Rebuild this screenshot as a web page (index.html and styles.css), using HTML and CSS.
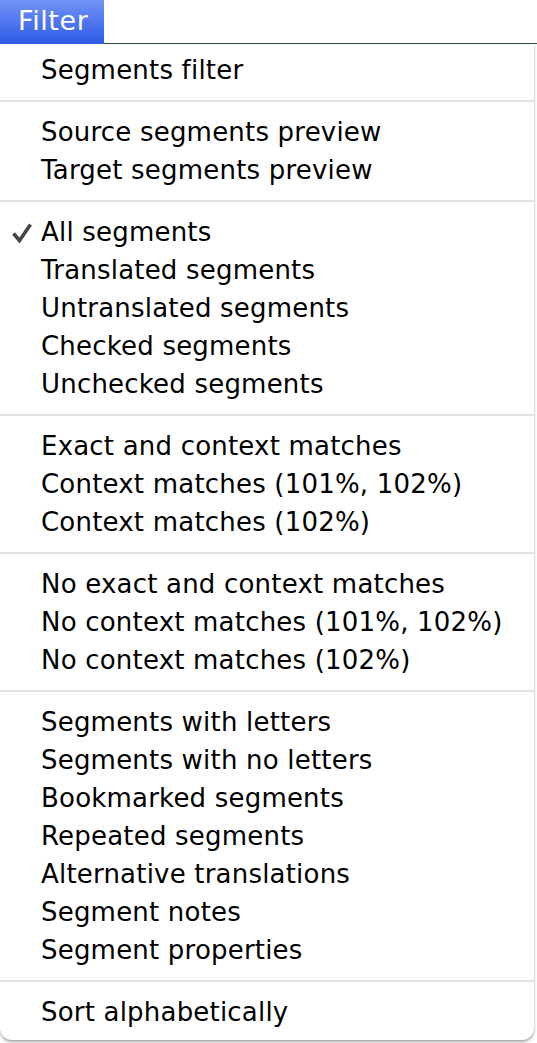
FILE: index.html
```
<!DOCTYPE html>
<html>
<head>
<meta charset="utf-8">
<link rel="stylesheet" href="styles.css">
</head>
<body>
<div class="menubar">
  <div class="title">Filter</div>
  <div class="bar-rest"></div>
</div>
<div class="menu">
  <div class="item">Segments filter</div>
  <div class="sep"></div>
  <div class="item">Source segments preview</div>
  <div class="item">Target segments preview</div>
  <div class="sep"></div>
  <div class="item checked"><svg class="check" width="22" height="22" viewBox="0 0 22 22"><path d="M2.5 11.5 L8.5 18.5 L19.5 2.5" fill="none" stroke="#464646" stroke-width="3.6" stroke-linejoin="miter"/></svg>All segments</div>
  <div class="item">Translated segments</div>
  <div class="item">Untranslated segments</div>
  <div class="item">Checked segments</div>
  <div class="item">Unchecked segments</div>
  <div class="sep"></div>
  <div class="item">Exact and context matches</div>
  <div class="item">Context matches (101%, 102%)</div>
  <div class="item">Context matches (102%)</div>
  <div class="sep"></div>
  <div class="item">No exact and context matches</div>
  <div class="item">No context matches (101%, 102%)</div>
  <div class="item">No context matches (102%)</div>
  <div class="sep"></div>
  <div class="item">Segments with letters</div>
  <div class="item">Segments with no letters</div>
  <div class="item">Bookmarked segments</div>
  <div class="item">Repeated segments</div>
  <div class="item">Alternative translations</div>
  <div class="item">Segment notes</div>
  <div class="item">Segment properties</div>
  <div class="sep"></div>
  <div class="item">Sort alphabetically</div>
</div>
</body>
</html>
```
FILE: styles.css
```
html, body {
  margin: 0;
  padding: 0;
  background: #ffffff;
}
body {
  width: 537px;
  height: 1043px;
  overflow: hidden;
  font-family: "DejaVu Sans", "Noto Sans", sans-serif;
}
.menubar {
  display: flex;
  height: 44px;
}
.title {
  width: 104px;
  height: 44px;
  box-sizing: border-box;
  padding-left: 18px;
  line-height: 42px;
  font-size: 27px;
  letter-spacing: 0.6px;
  color: #ffffff;
  background: linear-gradient(#7292f6, #2c5be7);
}
.bar-rest {
  flex: 1;
  height: 44px;
  box-sizing: border-box;
  border-bottom: 1px solid #2f4a40;
  background: #ffffff;
}
.menu {
  width: 534px;
  box-sizing: border-box;
  padding: 7px 0 9px 0;
  background: #ffffff;
  border-radius: 0 0 12px 12px;
  box-shadow: 0 2px 3px rgba(0, 0, 0, 0.35);
}
.item {
  position: relative;
  height: 38px;
  line-height: 39px;
  padding-left: 41px;
  font-size: 26px;
  letter-spacing: 0.2px;
  color: #000000;
  white-space: nowrap;
}
.check {
  position: absolute;
  left: 11px;
  top: 9px;
}
.sep {
  height: 24px;
  display: flex;
  align-items: center;
}
.sep::before {
  content: "";
  display: block;
  width: 100%;
  height: 2px;
  background: #e1e1e1;
}
```
